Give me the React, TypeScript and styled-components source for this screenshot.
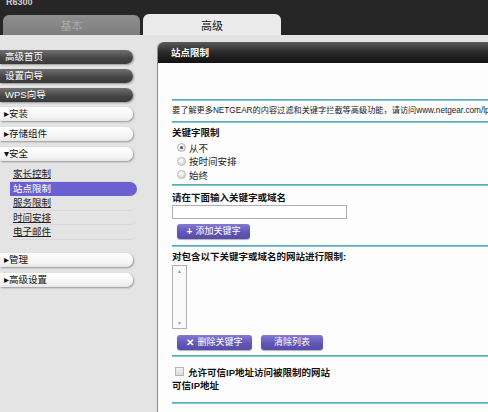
import styled, { createGlobalStyle } from "styled-components";

const GlobalStyle = createGlobalStyle`
  body {
    margin: 0;
    background: #e4e4e4;
    font-family: "Liberation Sans", "Noto Sans CJK SC", sans-serif;
  }
`;

const Page = styled.div`
  width: 488px;
  height: 412px;
  overflow: hidden;
  display: flex;
  flex-direction: column;
  background: #e4e4e4;
`;

const TopBar = styled.div`
  height: 35px;
  background: #262626;
  display: flex;
  flex-direction: column;
  justify-content: space-between;
`;

const Brand = styled.div`
  margin: -3px 0 0 6px;
  font-size: 9px;
  font-weight: bold;
  color: #d0d0d0;
  line-height: 10px;
`;

const Tabs = styled.div`
  display: flex;
  align-items: flex-end;
  gap: 3px;
  padding-left: 3px;
`;

const Tab = styled.div<{ $active?: boolean }>`
  width: ${(p) => (p.$active ? 138 : 137)}px;
  height: ${(p) => (p.$active ? 21 : 20)}px;
  border-radius: 6px 6px 0 0;
  background: ${(p) =>
    p.$active ? "#ebebeb" : "linear-gradient(#8f8f8f, #7d7d7d)"};
  color: ${(p) => (p.$active ? "#111" : "#a9a9a9")};
  font-size: 11px;
  display: flex;
  align-items: center;
  justify-content: center;
`;

const Body = styled.div`
  flex: 1;
  display: flex;
  min-height: 0;
`;

const Sidebar = styled.nav`
  width: 157px;
  flex-shrink: 0;
  padding-top: 15px;
  display: flex;
  flex-direction: column;
`;

const Pill = styled.div<{ $dark?: boolean }>`
  width: 133px;
  height: 14px;
  margin-bottom: ${(p) => (p.$dark ? 5 : 6)}px;
  border-radius: 0 8px 8px 0;
  box-sizing: border-box;
  padding-left: ${(p) => (p.$dark ? 5 : 4)}px;
  font-size: 9.5px;
  line-height: 14px;
  white-space: nowrap;
  background: ${(p) =>
    p.$dark
      ? "linear-gradient(#707070, #444 60%, #3a3a3a)"
      : "linear-gradient(#ffffff, #f4f4f4 70%, #e6e6e6)"};
  color: ${(p) => (p.$dark ? "#fff" : "#111")};
  box-shadow: 1px 1px 2px rgba(0, 0, 0, 0.35);
`;

const SubMenu = styled.div`
  display: flex;
  flex-direction: column;
  padding: 0 0 13px 0;
`;

const SubItem = styled.div<{ $active?: boolean }>`
  width: 127px;
  height: 14.5px;
  margin-left: 10px;
  box-sizing: border-box;
  padding-left: 3px;
  font-size: 9.5px;
  line-height: 14.5px;
  border-radius: 0 8px 8px 0;
  border-bottom: 1px solid ${(p) => (p.$active ? "transparent" : "#d8d8d8")};
  background: ${(p) => (p.$active ? "#6c5fcf" : "transparent")};
  color: ${(p) => (p.$active ? "#fff" : "#222")};
  text-decoration: ${(p) => (p.$active ? "none" : "underline")};
`;

const Main = styled.main`
  flex: 1;
  min-width: 0;
  padding-top: 7px;
  display: flex;
  flex-direction: column;
`;

const Panel = styled.section`
  flex: 1;
  background: #fdfdfd;
  border-left: 1px solid #8a8a8a;
  border-top-left-radius: 6px;
  display: flex;
  flex-direction: column;
`;

const PanelHeader = styled.div`
  height: 21px;
  border-top-left-radius: 6px;
  background: linear-gradient(#5a5a5a, #2a2a2a 50%, #111);
  color: #fff;
  font-size: 9.5px;
  font-weight: bold;
  line-height: 21px;
  padding-left: 13px;
`;

const Content = styled.div`
  padding: 36px 0 0 14px;
  display: flex;
  flex-direction: column;
`;

const Rule = styled.div<{ $gap?: number }>`
  height: 2px;
  margin-top: ${(p) => p.$gap ?? 0}px;
  background: linear-gradient(#3f9fb0, #9fd3dc);
`;

const Info = styled.div`
  height: 20px;
  line-height: 20px;
  font-size: 8.2px;
  color: #222;
  white-space: nowrap;
  overflow: hidden;
`;

const Label = styled.div<{ $pad?: number; $h?: number }>`
  padding-top: ${(p) => p.$pad ?? 0}px;
  line-height: ${(p) => p.$h ?? 16}px;
  font-size: 9.5px;
  font-weight: bold;
  color: #111;
  white-space: nowrap;
`;

const OptionRow = styled.label`
  height: 13.5px;
  display: flex;
  align-items: center;
  gap: 3px;
  padding-left: 5px;
  font-size: 9.5px;
  color: #222;
`;

const Radio = styled.span<{ $checked?: boolean }>`
  width: 7px;
  height: 7px;
  border-radius: 50%;
  background: radial-gradient(circle at 40% 35%, #fff, #c9c9c9);
  border: 1px solid #b8b8b8;
  display: flex;
  align-items: center;
  justify-content: center;
  &::after {
    content: "";
    width: 3px;
    height: 3px;
    border-radius: 50%;
    background: ${(p) => (p.$checked ? "#555" : "transparent")};
  }
`;

const CheckBox = styled.span`
  width: 7px;
  height: 7px;
  border: 1px solid #b5b5b5;
  background: linear-gradient(#f2f2f2, #ddd);
`;

const TextInput = styled.div`
  width: 175px;
  height: 14px;
  box-sizing: border-box;
  border: 1px solid #b0b0b0;
  background: #fff;
`;

const ButtonRow = styled.div<{ $gap: number }>`
  display: flex;
  gap: 9px;
  margin: ${(p) => p.$gap}px 0 0 5px;
`;

const ActionButton = styled.div<{ $w: number }>`
  width: ${(p) => p.$w}px;
  height: 15px;
  border-radius: 3px;
  background: linear-gradient(#8479d3, #6256b7 55%, #574ca8);
  box-shadow: 0 1px 1px rgba(0, 0, 0, 0.3);
  color: #fff;
  font-size: 9px;
  line-height: 15px;
  display: flex;
  justify-content: center;
  gap: 3px;
  b {
    font-size: 10px;
  }
`;

const ListBox = styled.div`
  width: 15px;
  height: 64px;
  box-sizing: border-box;
  border: 1px solid #b0b0b0;
  background: #fafafa;
  display: flex;
  flex-direction: column;
  justify-content: space-between;
  align-items: center;
  font-size: 5px;
  color: #999;
  padding: 2px 0;
`;

const CheckRow = styled.label`
  padding-top: 9px;
  height: 12px;
  display: flex;
  align-items: center;
  gap: 4px;
  padding-left: 3px;
  font-size: 9.5px;
  font-weight: bold;
  color: #111;
`;

const submenu = ["家长控制", "站点限制", "服务限制", "时间安排", "电子邮件"];

export default function App() {
  return (
    <>
      <GlobalStyle />
      <Page>
        <TopBar>
          <Brand>R6300</Brand>
          <Tabs>
            <Tab>基本</Tab>
            <Tab $active>高级</Tab>
          </Tabs>
        </TopBar>
        <Body>
          <Sidebar>
            <Pill $dark>高级首页</Pill>
            <Pill $dark>设置向导</Pill>
            <Pill $dark>WPS向导</Pill>
            <Pill>▸安装</Pill>
            <Pill>▸存储组件</Pill>
            <Pill>▾安全</Pill>
            <SubMenu>
              {submenu.map((s) => (
                <SubItem key={s} $active={s === "站点限制"}>
                  {s}
                </SubItem>
              ))}
            </SubMenu>
            <Pill>▸管理</Pill>
            <Pill>▸高级设置</Pill>
          </Sidebar>
          <Main>
            <Panel>
              <PanelHeader>站点限制</PanelHeader>
              <Content>
                <Rule />
                <Info>
                  要了解更多NETGEAR的内容过滤和关键字拦截等高级功能，请访问www.netgear.com/lpc
                </Info>
                <Rule />
                <Label $pad={2}>关键字限制</Label>
                <OptionRow>
                  <Radio $checked />
                  从不
                </OptionRow>
                <OptionRow>
                  <Radio />
                  按时间安排
                </OptionRow>
                <OptionRow>
                  <Radio />
                  始终
                </OptionRow>
                <Rule $gap={2} />
                <Label $pad={5} $h={14}>
                  请在下面输入关键字或域名
                </Label>
                <TextInput />
                <ButtonRow $gap={5}>
                  <ActionButton $w={73}>
                    <b>+</b>添加关键字
                  </ActionButton>
                </ButtonRow>
                <Rule $gap={6} />
                <Label $pad={2} $h={16}>
                  对包含以下关键字或域名的网站进行限制:
                </Label>
                <ListBox>
                  <span>▲</span>
                  <span>▼</span>
                </ListBox>
                <ButtonRow $gap={6}>
                  <ActionButton $w={75}>
                    <b>✕</b>删除关键字
                  </ActionButton>
                  <ActionButton $w={62}>清除列表</ActionButton>
                </ButtonRow>
                <Rule $gap={5} />
                <CheckRow>
                  <CheckBox />
                  允许可信IP地址访问被限制的网站
                </CheckRow>
                <Label $h={16}>可信IP地址</Label>
                <Rule $gap={8} />
              </Content>
            </Panel>
          </Main>
        </Body>
      </Page>
    </>
  );
}
